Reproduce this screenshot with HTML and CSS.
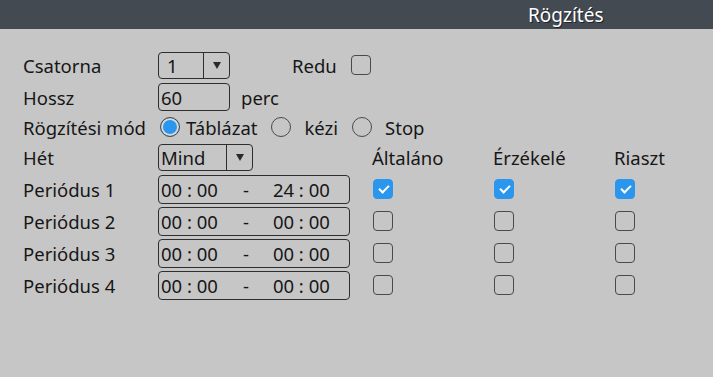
FILE: index.html
```html
<html>
  <head>
    <meta charset="utf-8">
    <link rel="stylesheet" href="styles.css">
  </head>
  <body>
    <div class="titlebar"><span class="title">Rögzítés</span></div>

    <div class="panel">
      <div class="row r32">
        <span class="label">Csatorna</span>
        <div class="select sel-ch"><span class="val">1</span><span class="arrow"></span></div>
        <span class="redu">Redu</span>
        <span class="check"></span>
      </div>

      <div class="row r32">
        <span class="label">Hossz</span>
        <div class="input">60</div>
        <span class="unit">perc</span>
      </div>

      <div class="row r28">
        <span class="label">Rögzítési mód</span>
        <span class="radio on"></span><span class="opt">Táblázat</span>
        <span class="radio"></span><span class="opt">kézi</span>
        <span class="radio"></span><span class="opt">Stop</span>
      </div>

      <div class="row r32">
        <span class="label">Hét</span>
        <div class="select sel-week"><span class="val">Mind</span><span class="arrow"></span></div>
        <span class="col head h1">Általáno</span>
        <span class="col head">Érzékelé</span>
        <span class="col head">Riaszt</span>
      </div>

      <div class="row r32">
        <span class="label">Periódus 1</span>
        <div class="period"><span class="t">00 : 00</span><span class="dash">-</span><span class="t">24 : 00</span></div>
        <span class="col"><span class="check on"></span></span>
        <span class="col"><span class="check on"></span></span>
        <span class="col"><span class="check on"></span></span>
      </div>

      <div class="row r32">
        <span class="label">Periódus 2</span>
        <div class="period"><span class="t">00 : 00</span><span class="dash">-</span><span class="t">00 : 00</span></div>
        <span class="col"><span class="check"></span></span>
        <span class="col"><span class="check"></span></span>
        <span class="col"><span class="check"></span></span>
      </div>

      <div class="row r32">
        <span class="label">Periódus 3</span>
        <div class="period"><span class="t">00 : 00</span><span class="dash">-</span><span class="t">00 : 00</span></div>
        <span class="col"><span class="check"></span></span>
        <span class="col"><span class="check"></span></span>
        <span class="col"><span class="check"></span></span>
      </div>

      <div class="row r32">
        <span class="label">Periódus 4</span>
        <div class="period"><span class="t">00 : 00</span><span class="dash">-</span><span class="t">00 : 00</span></div>
        <span class="col"><span class="check"></span></span>
        <span class="col"><span class="check"></span></span>
        <span class="col"><span class="check"></span></span>
      </div>
    </div>
  </body>
</html>
```

FILE: styles.css
```css
/* Page */
body {
  margin: 0;
  background: #c6c6c6;
  font-family: "Noto Sans", "DejaVu Sans", sans-serif;
  font-size: 18.5px;
  color: #161616;
}

/* Dark title strip on top */
.titlebar {
  height: 29px;
  background: #434a52;
  display: flex;
  align-items: center;
}

.title {
  margin-left: 528px;
  color: #ffffff;
  font-size: 19px;
  text-shadow: 1px 1px 0 #1e2226;
}

/* Form rows */
.panel {
  padding: 20px 0 0 23px;
}

.row {
  display: flex;
  align-items: center;
}

.row > * {
  flex: none;
}

.r32 {
  height: 32px;
}

.r28 {
  height: 28px;
}

.label {
  width: 135px;
}

/* Dropdowns and text inputs */
.select,
.input,
.period {
  box-sizing: border-box;
  border: 1px solid #2e2e2e;
  border-radius: 4px;
  display: flex;
  align-items: center;
  height: 27px;
}

.select .val {
  padding-left: 8px;
  flex: 1;
}

.sel-week .val {
  padding-left: 2px;
}

.select .arrow {
  width: 25px;
  align-self: stretch;
  border-left: 1px solid #2e2e2e;
  display: flex;
  align-items: center;
  justify-content: center;
}

.select .arrow::after {
  content: "";
  border-left: 4px solid transparent;
  border-right: 4px solid transparent;
  border-top: 7px solid #2a2a2a;
}

.sel-ch {
  width: 72px;
}

.sel-week {
  width: 95px;
}

.input {
  width: 72px;
  padding-left: 2px;
  height: 28px;
}

.unit {
  margin-left: 11px;
}

.redu {
  margin-left: 62px;
  margin-right: 14px;
}

/* Radio buttons */
.radio {
  box-sizing: border-box;
  width: 20px;
  height: 20px;
  border: 1px solid #4a4a4a;
  border-radius: 50%;
  margin: 0 13px 0 14px;
}

.radio.on {
  margin: 0 6px 0 2px;
  background: #2b96ee;
  box-shadow: inset 0 0 0 2px #d8d8d8;
}

/* Period time box */
.period {
  width: 192px;
  height: 29px;
  padding-left: 2px;
}

.period .dash {
  margin: 0 24px 0 25px;
}

/* Event type columns */
.col {
  width: 121px;
}

.head.h1 {
  margin-left: 119px;
}

.period + .col {
  margin-left: 23px;
}

/* Checkboxes */
.check {
  box-sizing: border-box;
  display: block;
  width: 20px;
  height: 20px;
  border: 1px solid #4a4a4a;
  border-radius: 4px;
  position: relative;
}

.check.on {
  background: #2b96ee;
  border-color: #2b96ee;
}

.check.on::after {
  content: "";
  position: absolute;
  left: 5px;
  top: 5px;
  width: 8px;
  height: 4px;
  border-left: 2px solid #ffffff;
  border-bottom: 2px solid #ffffff;
  transform: rotate(-45deg);
}
```
